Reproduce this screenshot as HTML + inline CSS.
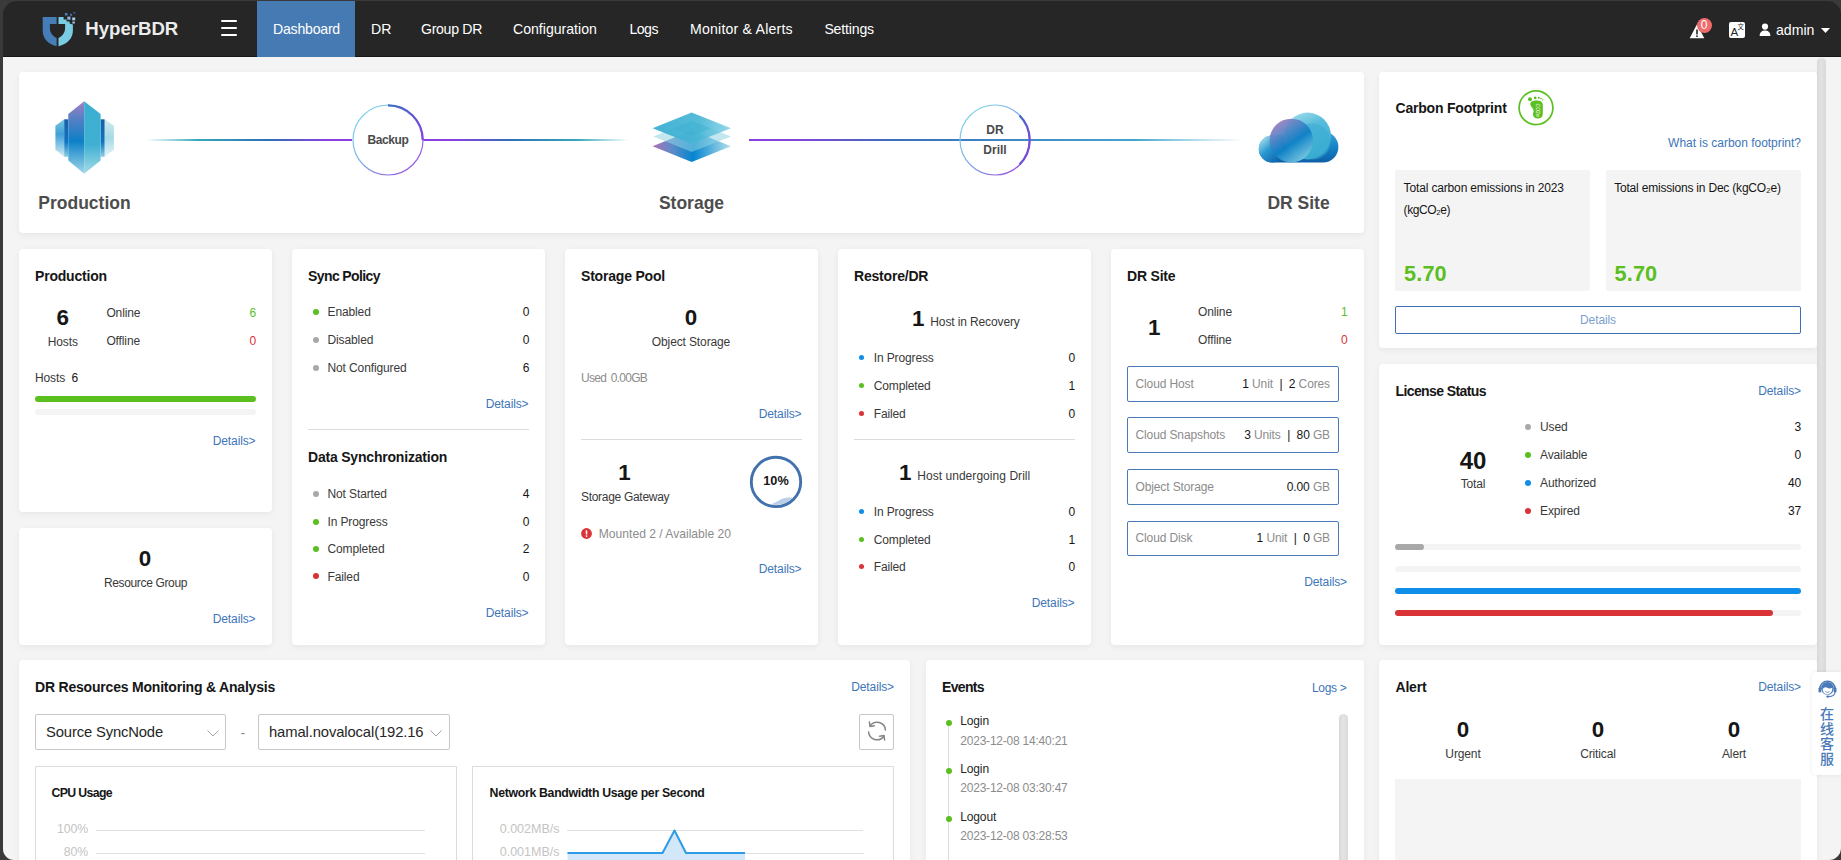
<!DOCTYPE html>
<html lang="en"><head><meta charset="utf-8"><title>HyperBDR Dashboard</title>
<style>
*{box-sizing:border-box;margin:0;padding:0}
html,body{width:1841px;height:860px;overflow:hidden;background:#f4f4f4}
body{font-family:"Liberation Sans","Noto Sans CJK SC",sans-serif;font-size:12px;color:#393939;position:relative}
#win{position:absolute;left:0;top:0;width:1841px;height:860px;background:#f4f4f4;overflow:hidden}
#hdr{position:absolute;left:0;top:0;width:1841px;height:57px;background:#262626;border-bottom:1px solid #171717}
.a{position:absolute;white-space:nowrap;line-height:1}
.card{position:absolute;background:#fff;border-radius:4px;box-shadow:0 2px 6px rgba(0,0,0,.06)}
.t{font-size:12px;letter-spacing:-.12px;color:#393939}
.h{font-size:14px;font-weight:700;color:#161616;letter-spacing:-.2px}
.n{font-size:22.4px;font-weight:700;color:#161616}
.b{font-weight:700;color:#161616}
.lk{color:#4076b8}
.g{color:#8c8c8c}
.k{color:#161616}
.r{text-align:right}
.c{text-align:center}
.dot{position:absolute;width:6px;height:6px;border-radius:50%}
.nav{color:#fff;font-size:14.1px;top:21.8px}
.hb{position:absolute;left:221px;width:16px;height:2px;background:#fff;border-radius:1px}
.hr{position:absolute;height:1px;background:#dcdcdc}
.bx{position:absolute;border:1px solid #4a7ab8;border-radius:2px;background:#fff}
.sel{position:absolute;border:1px solid #c6c6c6;border-radius:2px;background:#fff}
</style></head><body>
<div id="win">
<div id="hdr">
<div style="position:absolute;left:257px;top:1px;width:98px;height:56px;background:#467ab2"></div>
<svg class="a" style="left:36px;top:6px" width="46" height="46" viewBox="36 6 46 46">
<path d="M42.7 17 L56.6 17 L56.6 23.9 L49.9 23.9 L49.9 28 C49.9 32.5 52.6 36 56.6 38.1 L56.6 46.2 C48 44.2 42.7 38.5 42.7 30.5 Z" fill="#467db6"/>
<path d="M58.5 17 L63.6 17 L63.6 19.6 L66.6 19.6 L66.6 21.4 L69.6 21.4 L69.6 23.4 L72.9 24.6 L72.9 30.5 C72.9 38.5 67.2 44.2 58.5 46.2 L58.5 38.1 C62.4 36 65.1 32.5 65.1 28 L65.1 23.9 L58.5 23.9 Z" fill="#7acce2"/>
<rect x="64.9" y="13" width="2.6" height="2.5" fill="#4a80c2"/><rect x="70.1" y="13.8" width="2" height="1.9" fill="#447abc"/><rect x="73.3" y="11.9" width="2.1" height="1.6" fill="#2c629e"/>
<rect x="67.3" y="16.6" width="3.2" height="3.1" fill="#8ab6de"/><rect x="72.2" y="17.5" width="3" height="2.8" fill="#aacaea"/><rect x="72.4" y="21.5" width="2.4" height="2.1" fill="#9cc2e2"/>
</svg>
<div class="a" style="left:85.3px;top:19.5px;font-size:18.6px;font-weight:700;color:#ececec">HyperBDR</div>
<div class="hb" style="top:20px"></div><div class="hb" style="top:27px"></div><div class="hb" style="top:34px"></div>
<div class="a nav" style="left:273px;letter-spacing:-.22px">Dashboard</div>
<div class="a nav" style="left:371px">DR</div>
<div class="a nav" style="left:421px;letter-spacing:-.3px">Group DR</div>
<div class="a nav" style="left:513px">Configuration</div>
<div class="a nav" style="left:629.4px;letter-spacing:-.5px">Logs</div>
<div class="a nav" style="left:690px;letter-spacing:.21px">Monitor &amp; Alerts</div>
<div class="a nav" style="left:824.4px;letter-spacing:-.17px">Settings</div>
<svg class="a" style="left:1689px;top:23px" width="16" height="16" viewBox="0 0 16 16"><path d="M8 1.2 L15.3 15.2 L0.7 15.2 Z" fill="#fff"/><rect x="7.2" y="6.5" width="1.6" height="5" fill="#262626"/><rect x="7.2" y="12.4" width="1.6" height="1.6" fill="#262626"/></svg>
<div class="a c" style="left:1696.5px;top:17.5px;width:15px;height:15px;border-radius:50%;background:#f06c6c;color:#fff;font-size:12px;line-height:15px">0</div>
<div class="a" style="left:1729px;top:22px;width:16px;height:16px;border-radius:2px;background:#fff"></div>
<div class="a" style="left:1730.6px;top:25.6px;font-size:11.6px;color:#262626">A</div>
<div class="a" style="left:1737.6px;top:23.6px;font-size:6.4px;color:#262626;font-family:'Noto Sans CJK SC',sans-serif">文</div>
<svg class="a" style="left:1759px;top:23px" width="12" height="14" viewBox="0 0 12 14"><circle cx="6" cy="3.6" r="3.1" fill="#fff"/><path d="M0.6 13 C0.6 9.5 2.5 7.6 6 7.6 C9.5 7.6 11.4 9.5 11.4 13 Z" fill="#fff"/></svg>
<div class="a nav" style="left:1776px;top:23px">admin</div>
<svg class="a" style="left:1820.8px;top:28px" width="10" height="6" viewBox="0 0 10 6"><path d="M0 0H9L4.5 5Z" fill="#fff"/></svg>

</div>
<div class="card" style="left:19px;top:72px;width:1345px;height:161px"></div>
<svg class="a" style="left:19px;top:72px" width="1345" height="161" viewBox="19 72 1345 161">
<defs>
<linearGradient id="l1" x1="0" x2="1" y1="0" y2="0"><stop offset="0" stop-color="#3ab0c4" stop-opacity="0"/><stop offset=".25" stop-color="#35a9bc"/><stop offset=".6" stop-color="#2f6fb5"/><stop offset=".88" stop-color="#8a3fe0"/><stop offset="1" stop-color="#8a3fe0"/></linearGradient>
<linearGradient id="l2" x1="0" x2="1" y1="0" y2="0"><stop offset="0" stop-color="#8a3fe0"/><stop offset=".15" stop-color="#8a3fe0"/><stop offset=".42" stop-color="#2f6fb5"/><stop offset=".75" stop-color="#35a9bc"/><stop offset="1" stop-color="#3ab0c4" stop-opacity="0"/></linearGradient>
<linearGradient id="l3" x1="0" x2="1" y1="0" y2="0"><stop offset="0" stop-color="#8a3fe0"/><stop offset=".1" stop-color="#8044d8"/><stop offset=".3" stop-color="#3a6fb8"/><stop offset=".78" stop-color="#45a5cf"/><stop offset="1" stop-color="#5ab8d8" stop-opacity="0"/></linearGradient>
<linearGradient id="cg" x1="0.1" x2="0.9" y1="0.1" y2="0.9"><stop offset="0" stop-color="#7fd4ec"/><stop offset=".5" stop-color="#7fa8ea"/><stop offset="1" stop-color="#9a4fe0"/></linearGradient>
<linearGradient id="ca" x1="0" x2="1" y1="0" y2="1"><stop offset="0" stop-color="#3a6fc0"/><stop offset="1" stop-color="#8a3fe0"/></linearGradient>
<linearGradient id="pL" x1="0" x2="0" y1="0" y2="1"><stop offset="0" stop-color="#a67fc4"/><stop offset=".22" stop-color="#5a80c4"/><stop offset=".55" stop-color="#0d80c8"/><stop offset="1" stop-color="#9fd8ea"/></linearGradient>
<linearGradient id="pR" x1="0" x2="0" y1="0" y2="1"><stop offset="0" stop-color="#3aafd2"/><stop offset=".6" stop-color="#40b0d2"/><stop offset="1" stop-color="#a5dce8"/></linearGradient>
<linearGradient id="pW" x1="0" x2="0" y1="0" y2="1"><stop offset="0" stop-color="#7ac8e0"/><stop offset=".4" stop-color="#3f9fd8"/><stop offset="1" stop-color="#d5eef4"/></linearGradient>
<linearGradient id="pW2" x1="0" x2="0" y1="0" y2="1"><stop offset="0" stop-color="#d0ecf0"/><stop offset=".5" stop-color="#a5d9e6"/><stop offset="1" stop-color="#e6f5f8"/></linearGradient>
<linearGradient id="pD" x1="0" x2="0" y1="0" y2="1"><stop offset="0" stop-color="#1560a8"/><stop offset=".6" stop-color="#0d74c0"/><stop offset="1" stop-color="#8fcfe6"/></linearGradient>
<linearGradient id="s1" x1="0" x2="1" y1="0" y2="0"><stop offset="0" stop-color="#35acd0"/><stop offset=".6" stop-color="#4ab6d6"/><stop offset="1" stop-color="#8fd6ea"/></linearGradient>
<linearGradient id="s3" x1="0" x2="1" y1="0" y2="0"><stop offset="0" stop-color="#b06fb4"/><stop offset=".25" stop-color="#5a8cc8"/><stop offset=".52" stop-color="#0585d0"/><stop offset="1" stop-color="#b5e2ea"/></linearGradient>
<linearGradient id="c1" x1="0.15" x2="0.85" y1="0" y2="1"><stop offset="0" stop-color="#b57fbf"/><stop offset=".3" stop-color="#5585c5"/><stop offset=".55" stop-color="#0d80c6"/><stop offset="1" stop-color="#8fd6e6"/></linearGradient>
<linearGradient id="c2" x1="0.2" x2="0.6" y1="0" y2="1"><stop offset="0" stop-color="#a0dcec"/><stop offset=".35" stop-color="#5abddc"/><stop offset="1" stop-color="#3aacd2"/></linearGradient>
<linearGradient id="c4" x1="0.1" x2="0.8" y1="0.1" y2="0.9"><stop offset="0" stop-color="#a8dfea"/><stop offset=".45" stop-color="#2a98d0"/><stop offset="1" stop-color="#0d63ac"/></linearGradient>
<linearGradient id="c3" x1="0" x2="0" y1="0" y2="1"><stop offset="0" stop-color="#35a5d5"/><stop offset=".55" stop-color="#1580c4"/><stop offset="1" stop-color="#0d5fa8"/></linearGradient>
</defs>
<!-- lines -->
<rect x="146" y="139" width="206" height="2" fill="url(#l1)"/>
<rect x="423" y="139" width="206" height="2" fill="url(#l2)"/>
<rect x="749" y="139" width="495" height="2" fill="url(#l3)"/>
<!-- circles -->
<circle cx="388" cy="140" r="35" fill="#fff" stroke="url(#cg)" stroke-width="1.2"/>
<path d="M388 105.3 A34.7 34.7 0 0 1 422.7 140" fill="none" stroke="url(#ca)" stroke-width="2.2"/>
<circle cx="995" cy="140" r="35" fill="none" stroke="url(#cg)" stroke-width="1.2"/>
<path d="M1019.5 115.5 A34.7 34.7 0 0 1 1019.5 164.5" fill="none" stroke="url(#ca)" stroke-width="2.2"/>
<!-- production icon -->
<path d="M64.2 119.3 L55.4 125.7 L55.4 149.8 L64.2 156.8 Z" fill="url(#pW)"/>
<path d="M104.6 119.3 L113.9 125.7 L113.9 149.8 L104.6 156.8 Z" fill="url(#pW2)"/>
<path d="M64.2 119.3 L68.3 119.3 L68.3 156.8 L64.2 156.8 Z" fill="url(#pD)"/>
<path d="M100.6 119.3 L104.6 119.3 L104.6 156.8 L100.6 156.8 Z" fill="url(#pD)"/>
<path d="M84.2 101.3 L68.3 114 L68.3 160.6 L84.2 173.7 Z" fill="url(#pL)"/>
<path d="M84.2 101.3 L100.6 114 L100.6 160.6 L84.2 173.7 Z" fill="url(#pR)"/>
<!-- storage icon -->
<path d="M691.7 130.6 L731 146.2 L691.7 162 L652.6 146.2 Z" fill="url(#s3)"/>
<path d="M691.7 120.8 L731 136.4 L691.7 152 L653.4 136.4 Z" fill="#8fd3e2" fill-opacity=".55"/>
<path d="M691.7 112.5 L731 128.3 L691.7 143.7 L652.6 128.3 Z" fill="url(#s1)" fill-opacity=".93"/>
<path d="M691.7 120.8 L711 128.3 L691.7 136 L672.5 128.3 Z" fill="#3aaed0" fill-opacity=".35"/>
<!-- cloud icon -->
<path d="M1272.2 135.6 A13.4 13.4 0 0 0 1272.2 162.5 L1322.9 162.5 A15.5 15.5 0 0 0 1322.9 131.5 Z" fill="url(#c3)"/>
<circle cx="1272.2" cy="149" r="13.4" fill="url(#c4)"/>
<circle cx="1307.6" cy="136" r="23.4" fill="url(#c2)"/>
<circle cx="1312.5" cy="141.5" r="18" fill="#38acd2" fill-opacity=".55"/>
<circle cx="1291.3" cy="140.5" r="21.8" fill="url(#c1)" fill-opacity=".95"/>
</svg>
<div class="a c" style="left:19px;width:131px;top:194.6px;font-size:17.5px;font-weight:700;color:#4d4d4d">Production</div>
<div class="a c" style="left:626px;width:131px;top:194.6px;font-size:17.5px;font-weight:700;color:#4d4d4d">Storage</div>
<div class="a c" style="left:1233px;width:131px;top:194.6px;font-size:17.5px;font-weight:700;color:#4d4d4d">DR Site</div>
<div class="a c" style="left:353px;width:70px;top:134px;font-size:12px;font-weight:700;letter-spacing:-.4px;color:#4a4a4a">Backup</div>
<div class="a c" style="left:960px;width:70px;top:123.5px;font-size:12px;font-weight:700;color:#4a4a4a">DR</div>
<div class="a c" style="left:960px;width:70px;top:143.5px;font-size:12px;font-weight:700;color:#4a4a4a">Drill</div>


<div class="card" style="left:1379px;top:72px;width:438px;height:276px"></div>
<div class="a h" style="left:1395.5px;top:101.0px;">Carbon Footprint</div>
<svg class="a" style="left:1517px;top:89px" width="38" height="38" viewBox="0 0 38 38"><circle cx="19" cy="18.7" r="16.9" fill="#fff" stroke="#5bbf1f" stroke-width="1.7"/>
<path d="M13.4 15.4 C13 12.8 15.6 11.6 19.6 11.5 C23.4 11.4 25.7 12.6 25.8 15.4 C25.9 18.6 25.9 22.4 25.7 25.4 C25.5 28.2 23.6 29.5 20.8 29.5 C17.8 29.5 15.9 28 16 25.6 C16.1 23.6 16.9 22.4 16.4 20.8 C15.8 19 13.7 17.4 13.4 15.4 Z" fill="#5bbf1f"/>
<circle cx="13" cy="10.2" r="2" fill="#5bbf1f"/><circle cx="18.2" cy="8.9" r="1.3" fill="#5bbf1f"/><circle cx="21.7" cy="8.8" r="1" fill="#5bbf1f"/><circle cx="24" cy="9.5" r=".8" fill="#5bbf1f"/><circle cx="25.7" cy="10.9" r=".6" fill="#5bbf1f"/>
<text x="0" y="0" transform="translate(19.4 14.6) rotate(90)" font-size="5" font-family="Liberation Sans, sans-serif" fill="#fff">CO2e</text></svg>
<div class="a t lk" style="right:40px;top:136.8px;letter-spacing:-.02px">What is carbon footprint?</div>
<div class="a" style="left:1395px;top:170px;width:195px;height:121px;background:#f4f4f4;border-radius:2px"></div>
<div class="a" style="left:1606px;top:170px;width:195px;height:121px;background:#f4f4f4;border-radius:2px"></div>
<div class="a t k" style="left:1403.6px;top:181.8px;letter-spacing:-.15px">Total carbon emissions in 2023</div>
<div class="a t k" style="left:1403.6px;top:203.7px;letter-spacing:-.45px">(kgCO₂e)</div>
<div class="a t k" style="left:1614.2px;top:181.8px;letter-spacing:-.2px">Total emissions in Dec (kgCO₂e)</div>
<div class="a n" style="left:1404px;top:262.5px;font-size:21.7px;letter-spacing:.15px;color:#5bbf1f">5.70</div>
<div class="a n" style="left:1614.5px;top:262.5px;font-size:21.7px;letter-spacing:.15px;color:#5bbf1f">5.70</div>
<div class="a c t" style="left:1395px;top:306px;width:406px;height:28px;border:1px solid #3d70b2;border-radius:2px;background:#fff;color:#7d9fcd;line-height:27px">Details</div>
<div class="card" style="left:1379px;top:364px;width:438px;height:281px"></div>
<div class="a h" style="left:1395.5px;top:384.0px;letter-spacing:-.6px">License Status</div>
<div class="a t lk" style="right:40px;top:384.8px;">Details&gt;</div>
<div class="a c n" style="left:1323px;width:300px;top:449.2px;font-size:24px">40</div>
<div class="a c t" style="left:1323px;width:300px;top:477.6px;">Total</div>
<div class="dot" style="left:1524.7px;top:423.6px;background:#a8a8a8"></div>
<div class="a t" style="left:1540px;top:421.2px;">Used</div>
<div class="a t k" style="right:40px;top:421.2px;">3</div>
<div class="dot" style="left:1524.7px;top:451.6px;background:#5bbf1f"></div>
<div class="a t" style="left:1540px;top:449.2px;">Available</div>
<div class="a t k" style="right:40px;top:449.2px;">0</div>
<div class="dot" style="left:1524.7px;top:479.6px;background:#0f8ee9"></div>
<div class="a t" style="left:1540px;top:477.2px;">Authorized</div>
<div class="a t k" style="right:40px;top:477.2px;">40</div>
<div class="dot" style="left:1524.7px;top:507.6px;background:#da3337"></div>
<div class="a t" style="left:1540px;top:505.2px;">Expired</div>
<div class="a t k" style="right:40px;top:505.2px;">37</div>
<div class="a" style="left:1395px;top:544px;width:406px;height:6px;border-radius:3.0px;background:#f4f4f4"><div style="width:29px;height:6px;border-radius:3.0px;background:#a8a8a8"></div></div>
<div class="a" style="left:1395px;top:566px;width:406px;height:6px;border-radius:3.0px;background:#f4f4f4"></div>
<div class="a" style="left:1395px;top:588px;width:406px;height:6px;border-radius:3.0px;background:#0f8ee9"></div>
<div class="a" style="left:1395px;top:610px;width:406px;height:6px;border-radius:3.0px;background:#f4f4f4"><div style="width:378px;height:6px;border-radius:3.0px;background:#da3337"></div></div>
<div class="card" style="left:1379px;top:660px;width:438px;height:220px"></div>
<div class="a h" style="left:1395.5px;top:680.0px;">Alert</div>
<div class="a t lk" style="right:40px;top:680.8px;">Details&gt;</div>
<div class="a c n" style="left:1313px;width:300px;top:719.0px;">0</div>
<div class="a c t" style="left:1313px;width:300px;top:747.8px;">Urgent</div>
<div class="a c n" style="left:1448px;width:300px;top:719.0px;">0</div>
<div class="a c t" style="left:1448px;width:300px;top:747.8px;">Critical</div>
<div class="a c n" style="left:1584px;width:300px;top:719.0px;">0</div>
<div class="a c t" style="left:1584px;width:300px;top:747.8px;">Alert</div>
<div class="a" style="left:1395px;top:779px;width:406px;height:91px;background:#f4f4f4"></div>
<div class="card" style="left:19px;top:249px;width:253px;height:263px"></div>
<div class="a h" style="left:35px;top:268.6px;">Production</div>
<div class="a c n" style="left:-87.2px;width:300px;top:306.8px;">6</div>
<div class="a c t" style="left:-87.2px;width:300px;top:336.2px;">Hosts</div>
<div class="a t" style="left:106.4px;top:306.8px;">Online</div>
<div class="a t" style="right:1585px;top:306.8px;color:#5bbf1f">6</div>
<div class="a t" style="left:106.4px;top:334.6px;">Offline</div>
<div class="a t" style="right:1585px;top:334.6px;color:#da3337">0</div>
<div class="a t" style="left:35px;top:371.8px;">Hosts&nbsp;&nbsp;<span class="k">6</span></div>
<div class="a" style="left:35px;top:396px;width:221px;height:6px;border-radius:3.0px;background:#5bbf1f"></div>
<div class="a" style="left:35px;top:409px;width:221px;height:6px;border-radius:3.0px;background:#f4f4f4"></div>
<div class="a t lk" style="right:1585.5px;top:435.3px;">Details&gt;</div>
<div class="card" style="left:19px;top:528px;width:253px;height:117px"></div>
<div class="a c n" style="left:-5px;width:300px;top:547.8px;">0</div>
<div class="a c t" style="left:-4.5px;width:300px;top:577.0px;letter-spacing:-.35px">Resource Group</div>
<div class="a t lk" style="right:1585.5px;top:613.0px;">Details&gt;</div>
<div class="card" style="left:292px;top:249px;width:253px;height:396px"></div>
<div class="a h" style="left:308px;top:268.6px;letter-spacing:-.6px">Sync Policy</div>
<div class="dot" style="left:312.6px;top:308.8px;background:#5bbf1f"></div>
<div class="a t" style="left:327.5px;top:306.4px;">Enabled</div>
<div class="a t k" style="right:1311.7px;top:306.4px;">0</div>
<div class="dot" style="left:312.6px;top:336.6px;background:#a8a8a8"></div>
<div class="a t" style="left:327.5px;top:334.2px;">Disabled</div>
<div class="a t k" style="right:1311.7px;top:334.2px;">0</div>
<div class="dot" style="left:312.6px;top:364.9px;background:#a8a8a8"></div>
<div class="a t" style="left:327.5px;top:361.6px;">Not Configured</div>
<div class="a t k" style="right:1311.7px;top:361.6px;">6</div>
<div class="a t lk" style="right:1312.5px;top:397.6px;">Details&gt;</div>
<div class="hr" style="left:308px;top:429px;width:221px"></div>
<div class="a h" style="left:308px;top:450.3px;">Data Synchronization</div>
<div class="dot" style="left:312.6px;top:490.9px;background:#a8a8a8"></div>
<div class="a t" style="left:327.5px;top:487.6px;">Not Started</div>
<div class="a t k" style="right:1311.7px;top:487.6px;">4</div>
<div class="dot" style="left:312.6px;top:518.7px;background:#5bbf1f"></div>
<div class="a t" style="left:327.5px;top:516.3px;">In Progress</div>
<div class="a t k" style="right:1311.7px;top:516.3px;">0</div>
<div class="dot" style="left:312.6px;top:545.8px;background:#5bbf1f"></div>
<div class="a t" style="left:327.5px;top:543.4px;">Completed</div>
<div class="a t k" style="right:1311.7px;top:543.4px;">2</div>
<div class="dot" style="left:312.6px;top:573.4px;background:#da3337"></div>
<div class="a t" style="left:327.5px;top:571.0px;">Failed</div>
<div class="a t k" style="right:1311.7px;top:571.0px;">0</div>
<div class="a t lk" style="right:1312.5px;top:606.6px;">Details&gt;</div>
<div class="card" style="left:565px;top:249px;width:253px;height:396px"></div>
<div class="a h" style="left:581px;top:268.6px;">Storage Pool</div>
<div class="a c n" style="left:541px;width:300px;top:306.5px;">0</div>
<div class="a c t" style="left:541px;width:300px;top:335.6px;">Object Storage</div>
<div class="a t g" style="left:581px;top:372.1px;font-size:12px;letter-spacing:-.7px;word-spacing:1.8px">Used 0.00GB</div>
<div class="a t lk" style="right:1039.5px;top:407.9px;">Details&gt;</div>
<div class="hr" style="left:581px;top:439px;width:221px"></div>
<div class="a c n" style="left:474.5px;width:300px;top:462.2px;">1</div>
<div class="a t" style="left:581px;top:490.9px;letter-spacing:-.3px">Storage Gateway</div>
<svg class="a" style="left:748px;top:453px" width="56" height="58" viewBox="0 0 56 58"><defs><clipPath id="gc"><circle cx="28" cy="28.9" r="23.2"/></clipPath></defs>
<circle cx="28" cy="28.9" r="24.7" fill="#fff" stroke="#4272ad" stroke-width="2.9"/>
<path d="M20 58 L22 51.5 C28 50 31 46.5 36 45.2 C40 44.2 44 44.6 50 45.4 L52 58 Z" fill="#b9cfe8" clip-path="url(#gc)"/></svg>
<div class="a c t b" style="left:626px;width:300px;top:474.8px;font-size:12.7px;letter-spacing:0">10%</div>
<svg class="a" style="left:581px;top:528px" width="11" height="11" viewBox="0 0 11 11"><circle cx="5.5" cy="5.5" r="5.4" fill="#da3337"/><rect x="4.7" y="2.3" width="1.6" height="4.2" rx=".6" fill="#fff"/><circle cx="5.5" cy="8.1" r=".9" fill="#fff"/></svg>
<div class="a t g" style="left:598.8px;top:528.3px;font-size:12.1px;letter-spacing:0">Mounted 2 / Available 20</div>
<div class="a t lk" style="right:1039.5px;top:563.2px;">Details&gt;</div>
<div class="card" style="left:838px;top:249px;width:253px;height:396px"></div>
<div class="a h" style="left:854px;top:268.6px;">Restore/DR</div>
<div class="a n" style="left:912px;top:307.5px;">1</div>
<div class="a t" style="left:930.3px;top:315.6px;">Host in Recovery</div>
<div class="dot" style="left:859.0px;top:355.2px;width:5px;height:5px;background:#0f8ee9"></div>
<div class="a t" style="left:873.7px;top:352.3px;">In Progress</div>
<div class="a t k" style="right:766px;top:352.3px;">0</div>
<div class="dot" style="left:859.0px;top:383.0px;width:5px;height:5px;background:#5bbf1f"></div>
<div class="a t" style="left:873.7px;top:380.1px;">Completed</div>
<div class="a t k" style="right:766px;top:380.1px;">1</div>
<div class="dot" style="left:859.0px;top:410.8px;width:5px;height:5px;background:#da3337"></div>
<div class="a t" style="left:873.7px;top:407.9px;">Failed</div>
<div class="a t k" style="right:766px;top:407.9px;">0</div>
<div class="hr" style="left:854px;top:439px;width:221px"></div>
<div class="a n" style="left:899px;top:461.5px;">1</div>
<div class="a t" style="left:917.2px;top:470.4px;letter-spacing:.05px">Host undergoing Drill</div>
<div class="dot" style="left:859.0px;top:509.0px;width:5px;height:5px;background:#0f8ee9"></div>
<div class="a t" style="left:873.7px;top:506.1px;">In Progress</div>
<div class="a t k" style="right:766px;top:506.1px;">0</div>
<div class="dot" style="left:859.0px;top:536.8px;width:5px;height:5px;background:#5bbf1f"></div>
<div class="a t" style="left:873.7px;top:533.9px;">Completed</div>
<div class="a t k" style="right:766px;top:533.9px;">1</div>
<div class="dot" style="left:859.0px;top:564.2px;width:5px;height:5px;background:#da3337"></div>
<div class="a t" style="left:873.7px;top:561.3px;">Failed</div>
<div class="a t k" style="right:766px;top:561.3px;">0</div>
<div class="a t lk" style="right:766.5px;top:597.4px;">Details&gt;</div>
<div class="card" style="left:1111px;top:249px;width:253px;height:396px"></div>
<div class="a h" style="left:1127px;top:268.6px;">DR Site</div>
<div class="a c n" style="left:1004.3px;width:300px;top:317.0px;">1</div>
<div class="a t" style="left:1198px;top:305.9px;">Online</div>
<div class="a t" style="right:493.5px;top:305.9px;color:#5bbf1f">1</div>
<div class="a t" style="left:1198px;top:333.7px;">Offline</div>
<div class="a t" style="right:493.5px;top:333.7px;color:#da3337">0</div>
<div class="bx" style="left:1127px;top:366px;width:212px;height:35.5px;"></div>
<div class="a t g" style="left:1135.5px;top:377.8px;">Cloud Host</div>
<div class="a t g" style="right:511px;top:377.8px;"><span class="k">1</span> Unit&nbsp; <span class="k">|</span> &nbsp;<span class="k">2</span> Cores</div>
<div class="bx" style="left:1127px;top:417px;width:212px;height:35.5px;"></div>
<div class="a t g" style="left:1135.5px;top:428.8px;">Cloud Snapshots</div>
<div class="a t g" style="right:511px;top:428.8px;"><span class="k">3</span> Units&nbsp; <span class="k">|</span> &nbsp;<span class="k">80</span> GB</div>
<div class="bx" style="left:1127px;top:469px;width:212px;height:35.5px;"></div>
<div class="a t g" style="left:1135.5px;top:480.8px;">Object Storage</div>
<div class="a t g" style="right:511px;top:480.8px;"><span class="k">0.00</span> GB</div>
<div class="bx" style="left:1127px;top:520.6px;width:212px;height:35.5px;"></div>
<div class="a t g" style="left:1135.5px;top:532.4px;">Cloud Disk</div>
<div class="a t g" style="right:511px;top:532.4px;"><span class="k">1</span> Unit&nbsp; <span class="k">|</span> &nbsp;<span class="k">0</span> GB</div>
<div class="a t lk" style="right:494px;top:575.6px;">Details&gt;</div>
<div class="card" style="left:19px;top:660px;width:891px;height:220px"></div>
<div class="a h" style="left:35px;top:680.0px;">DR Resources Monitoring &amp; Analysis</div>
<div class="a t lk" style="right:947px;top:680.8px;">Details&gt;</div>
<div class="sel" style="left:35px;top:714px;width:191px;height:36px;"></div>
<div class="sel" style="left:258px;top:714px;width:192px;height:36px;"></div>
<div class="sel" style="left:859px;top:714px;width:35px;height:36px;"></div>
<div class="a t k" style="left:46px;top:725.2px;font-size:14.8px;letter-spacing:-.15px;color:#262626">Source SyncNode</div>
<div class="a t k" style="left:269px;top:725.2px;font-size:14.8px;letter-spacing:-.12px;color:#262626">hamal.novalocal(192.16</div>
<div class="a t g" style="left:240.5px;top:725.5px;font-size:14px">-</div>
<svg class="a" style="left:206px;top:728px" width="14" height="10" viewBox="0 0 14 10"><path d="M1.5 2.5 L7 8 L12.5 2.5" fill="none" stroke="#a8a8a8" stroke-width="1"/></svg>
<svg class="a" style="left:429px;top:728px" width="14" height="10" viewBox="0 0 14 10"><path d="M1.5 2.5 L7 8 L12.5 2.5" fill="none" stroke="#a8a8a8" stroke-width="1"/></svg>
<svg class="a" style="left:865.5px;top:720px;transform:scaleX(-1)" width="22" height="22" viewBox="0 0 22 22" fill="none" stroke="#858585" stroke-width="1.5" stroke-linecap="round" stroke-linejoin="round"><path d="M2.6 10 A8.4 8.4 0 0 1 17.8 5.8"/><path d="M18.6 2 L18 6.4 L13.6 5.8"/><path d="M19.4 12 A8.4 8.4 0 0 1 4.2 16.2"/><path d="M3.4 20 L4 15.6 L8.4 16.2"/></svg>
<div class="sel" style="left:35px;top:766px;width:422px;height:114px;border-color:#dcdcdc;border-radius:0"></div>
<div class="sel" style="left:472px;top:766px;width:422px;height:114px;border-color:#dcdcdc;border-radius:0"></div>
<div class="a t b" style="left:51.5px;top:786.7px;font-size:12.3px;letter-spacing:-.65px">CPU Usage</div>
<div class="a t b" style="left:489.6px;top:786.7px;font-size:12.3px;letter-spacing:-.31px">Network Bandwidth Usage per Second</div>
<div class="a t" style="right:1753px;top:823.2px;color:#c4c4c4;font-size:12.3px">100%</div>
<div class="a t" style="right:1753px;top:846.2px;color:#c4c4c4;font-size:12.3px">80%</div>
<div class="a t" style="right:1281.5px;top:823.1px;color:#c4c4c4;font-size:12.5px;letter-spacing:0">0.002MB/s</div>
<div class="a t" style="right:1281.5px;top:846.1px;color:#c4c4c4;font-size:12.5px;letter-spacing:0">0.001MB/s</div>
<div class="hr" style="left:96px;top:830px;width:329px;background:#e0e0e0"></div><div class="hr" style="left:96px;top:852.5px;width:329px;background:#e0e0e0"></div>
<div class="hr" style="left:567px;top:830px;width:296px;background:#e0e0e0"></div><div class="hr" style="left:567px;top:852.5px;width:297px;background:#e0e0e0"></div>
<svg class="a" style="left:560px;top:820px" width="320" height="40" viewBox="560 820 320 40"><path d="M567.5 853 L662.5 853 L674.5 830.5 L686 853 L745 853 L745 862 L567.5 862 Z" fill="#d2e8f8"/><path d="M567.5 853 L662.5 853 L674.5 830.5 L686 853 L745 853" fill="none" stroke="#2d9be6" stroke-width="2" stroke-linejoin="round"/></svg>
<div class="card" style="left:926px;top:660px;width:438px;height:220px"></div>
<div class="a h" style="left:942px;top:680.2px;letter-spacing:-.65px">Events</div>
<div class="a t lk" style="right:494.5px;top:681.8px;font-size:12px;letter-spacing:-.3px">Logs &gt;</div>
<div class="a" style="left:948.2px;top:723px;width:1px;height:140px;background:#dcdcdc"></div>
<div class="dot" style="left:945.7px;top:720.0px;background:#5bbf1f"></div>
<div class="a t k" style="left:960.3px;top:714.9px;font-size:12px;letter-spacing:-.15px;color:#262626">Login</div>
<div class="a t g" style="left:960.3px;top:734.7px;font-size:12px;letter-spacing:-.22px">2023-12-08 14:40:21</div>
<div class="dot" style="left:945.7px;top:768.4px;background:#5bbf1f"></div>
<div class="a t k" style="left:960.3px;top:763.3px;font-size:12px;letter-spacing:-.15px;color:#262626">Login</div>
<div class="a t g" style="left:960.3px;top:782.4px;font-size:12px;letter-spacing:-.22px">2023-12-08 03:30:47</div>
<div class="dot" style="left:945.7px;top:815.6999999999999px;background:#5bbf1f"></div>
<div class="a t k" style="left:960.3px;top:810.6px;font-size:12px;letter-spacing:-.15px;color:#262626">Logout</div>
<div class="a t g" style="left:960.3px;top:830.4px;font-size:12px;letter-spacing:-.22px">2023-12-08 03:28:53</div>
<div class="dot" style="left:945.7px;top:864.1999999999999px;background:#5bbf1f"></div>
<div class="a t k" style="left:960.3px;top:859.1px;font-size:12px;letter-spacing:-.15px;color:#262626">Add DR host configuration</div>
<div class="a t g" style="left:960.3px;top:878.9px;font-size:12px;letter-spacing:-.22px">2023-12-08 03:28:20</div>
<div class="a" style="left:1339.4px;top:714px;width:8.6px;height:160px;border-radius:4.3px;background:linear-gradient(90deg,#d8d8d8,#e4e4e4 45%,#dadada)"></div>
<div class="a" style="left:1817.4px;top:58px;width:8.4px;height:640px;border-radius:4.2px;background:linear-gradient(90deg,#d8d8d8,#e2e2e2 45%,#d9d9d9)"></div>
<div class="a" style="left:1812px;top:672px;width:32px;height:103px;border-radius:4px 0 0 4px;background:#fff;box-shadow:0 0 4px rgba(0,0,0,.08)"></div>
<svg class="a" style="left:1817.5px;top:679.5px" width="19" height="19" viewBox="0 0 19 19"><circle cx="9.5" cy="8.4" r="6.4" fill="#4a7ab8"/><path d="M4.6 9.2 C5.6 7.4 7.6 6.4 9.4 7.8 C10.8 8.9 12.8 8.6 14.2 7.8 C14.8 11.4 12.6 14.2 9.5 14.2 C6.8 14.2 4.7 12.2 4.6 9.2 Z" fill="#fff"/><path d="M7.6 11.6 C8.6 12.6 10.4 12.6 11.4 11.6" fill="none" stroke="#4a7ab8" stroke-width=".9"/><path d="M1.8 9 A7.7 7.7 0 0 1 17.2 9" fill="none" stroke="#4a7ab8" stroke-width="1.5"/><rect x=".5" y="7.4" width="2.6" height="5" rx="1.2" fill="#4a7ab8"/><rect x="15.9" y="7.4" width="2.6" height="5" rx="1.2" fill="#4a7ab8"/><path d="M17 12 C17 15.4 14 16.6 10.6 16.6" fill="none" stroke="#4a7ab8" stroke-width="1.1"/><ellipse cx="9.8" cy="16.6" rx="1.6" ry="1.1" fill="#4a7ab8"/></svg>
<div class="a c" style="left:1819px;width:16px;top:705.6px;font-size:14px;font-weight:500;color:#4a7ab8;font-family:'Noto Sans CJK SC',sans-serif">在</div>
<div class="a c" style="left:1819px;width:16px;top:720.7px;font-size:14px;font-weight:500;color:#4a7ab8;font-family:'Noto Sans CJK SC',sans-serif">线</div>
<div class="a c" style="left:1819px;width:16px;top:735.8000000000001px;font-size:14px;font-weight:500;color:#4a7ab8;font-family:'Noto Sans CJK SC',sans-serif">客</div>
<div class="a c" style="left:1819px;width:16px;top:750.9px;font-size:14px;font-weight:500;color:#4a7ab8;font-family:'Noto Sans CJK SC',sans-serif">服</div>
</div>
<!-- window frame overlay -->
<div style="position:absolute;left:0;top:0;width:3px;height:860px;background:#3a3a3a"></div>
<div style="position:absolute;left:0;top:0;width:1841px;height:1px;background:#3a3a3a"></div>
<svg style="position:absolute;left:0;top:0" width="20" height="20"><path d="M0 0H20V1H17A14 14 0 0 0 3 15V20H0Z" fill="#3a3a3a"/></svg>
<svg style="position:absolute;left:1821px;top:0" width="20" height="20"><path d="M20 0H0V1H6A14 14 0 0 1 20 15Z" fill="#3a3a3a"/></svg>
<svg style="position:absolute;left:1829px;top:848px" width="12" height="12"><path d="M12 12H0A12 12 0 0 0 12 0Z" fill="#3a3a3a"/></svg>
<svg style="position:absolute;left:0;top:848px" width="14" height="12"><path d="M0 12H14A11 11 0 0 1 3 1V0H0Z" fill="#3a3a3a"/></svg>

</body></html>
